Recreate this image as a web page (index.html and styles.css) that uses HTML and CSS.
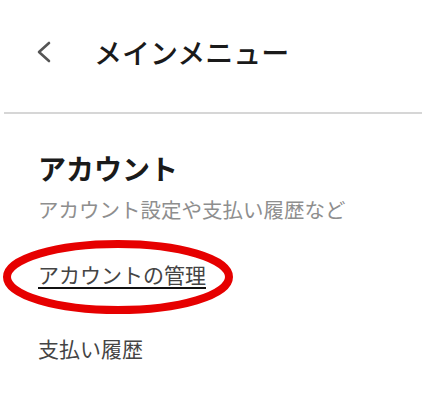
FILE: index.html
```html
<!DOCTYPE html>
<html lang="ja">
<head>
  <meta charset="UTF-8">
  <meta name="viewport" content="width=device-width, initial-scale=1.0">
  <title>メインメニュー</title>
  <link rel="stylesheet" href="styles.css">
</head>
<body>

<header class="menu-header">
  <button class="back-button" aria-label="戻る">
    <svg width="16" height="24" viewBox="0 0 16 24">
      <polyline points="13,3 3,12 13,21" fill="none" stroke="#555" stroke-width="2.6" stroke-linecap="round" stroke-linejoin="round"/>
    </svg>
  </button>
  <span class="menu-title">メインメニュー</span>
</header>

<div class="divider"></div>

<section class="account">
  <h2>アカウント</h2>
  <p class="account-sub">アカウント設定や支払い履歴など</p>
  <ul class="account-links">
    <li class="circled">
      <a href="#">アカウントの管理</a>
      <svg class="circle-mark" width="234" height="78" viewBox="0 0 234 78">
        <ellipse cx="117" cy="39" rx="111" ry="33" fill="none" stroke="#e60000" stroke-width="8"/>
      </svg>
    </li>
    <li><a href="#" class="plain">支払い履歴</a></li>
  </ul>
</section>

</body>
</html>
```

FILE: styles.css
```css
body {
  margin: 0;
  padding: 0;
  background: #fff;
  color: #222;
  font-family: "Noto Sans CJK JP", "Noto Sans", sans-serif;
}

.menu-header {
  display: flex;
  align-items: center;
  height: 104px;
  padding-left: 36px;
}

.back-button {
  background: transparent;
  border: none;
  padding: 0;
  width: 16px;
  height: 24px;
  cursor: pointer;
}

.menu-title {
  margin-left: 42px;
  font-size: 28px;
  font-weight: 500;
  color: #1a1a1a;
  line-height: 1;
}

.divider {
  height: 2px;
  margin: 8px 0 0 4px;
  background-color: #d6d6d6;
}

.account {
  padding: 36px 0 0 38px;
}

.account h2 {
  margin: 0;
  font-size: 28px;
  font-weight: 700;
  line-height: 36px;
  color: #1a1a1a;
}

.account-sub {
  margin: 8px 0 0;
  font-size: 20.5px;
  line-height: 30px;
  color: #8e8e8e;
}

.account-links {
  list-style: none;
  margin: 0;
  padding: 0;
}

.account-links li {
  margin-top: 36px;
  font-size: 21px;
  line-height: 28px;
}

.account-links li + li {
  margin-top: 46px;
}

.account-links a {
  color: #444;
  text-decoration: none;
}

.circled {
  position: relative;
}

.circled a {
  text-decoration: underline;
  text-decoration-color: #111;
  text-decoration-thickness: 2px;
  text-underline-offset: 4px;
}

.circle-mark {
  position: absolute;
  left: -37px;
  top: -22px;
  pointer-events: none;
}
```
